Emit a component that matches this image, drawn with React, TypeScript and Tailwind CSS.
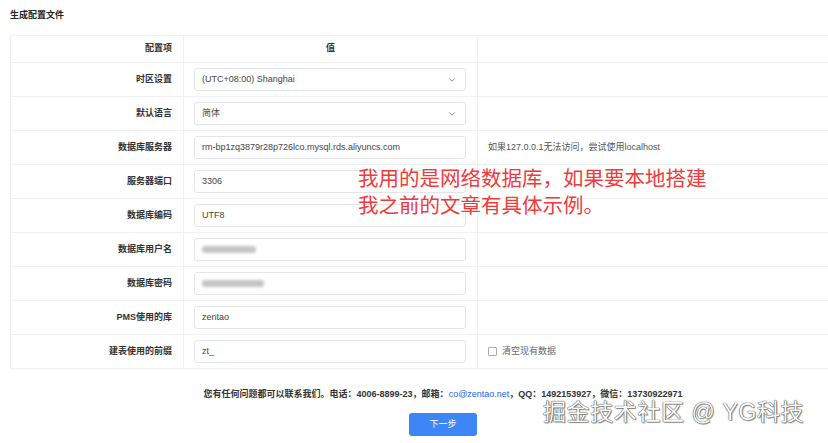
import { ChevronDown } from "lucide-react"

const font = { fontFamily: '"Liberation Sans", "Noto Sans CJK SC", sans-serif' }

type Row = {
  label: string
  kind: "select" | "input" | "blur"
  value?: string
  blurW?: number
  note?: string
  check?: string
}

const rows: Row[] = [
  { label: "时区设置", kind: "select", value: "(UTC+08:00) Shanghai" },
  { label: "默认语言", kind: "select", value: "简体" },
  {
    label: "数据库服务器",
    kind: "input",
    value: "rm-bp1zq3879r28p726lco.mysql.rds.aliyuncs.com",
    note: "如果127.0.0.1无法访问，尝试使用localhost",
  },
  { label: "服务器端口", kind: "input", value: "3306" },
  { label: "数据库编码", kind: "input", value: "UTF8" },
  { label: "数据库用户名", kind: "blur", blurW: 54 },
  { label: "数据库密码", kind: "blur", blurW: 62 },
  { label: "PMS使用的库", kind: "input", value: "zentao" },
  { label: "建表使用的前缀", kind: "input", value: "zt_", check: "清空现有数据" },
]

function Field({ row }: { row: Row }) {
  return (
    <div className="flex h-[23px] w-[272px] items-center rounded-[3px] border border-[#e3e5e8] bg-white pl-[7px] pr-[8px] text-[9px] text-[#444]">
      {row.kind === "blur" ? (
        <div className="h-[7px] rounded-[3px] bg-[#c4c4c4] blur-[1.5px]" style={{ width: row.blurW }} />
      ) : (
        <span className="flex-1 truncate">{row.value}</span>
      )}
      {row.kind === "select" && <ChevronDown className="ml-auto h-[10px] w-[10px] text-[#777]" strokeWidth={2} />}
    </div>
  )
}

export default function App() {
  return (
    <div className="relative h-[443px] w-[828px] overflow-hidden bg-white" style={font}>
      {/* page is wider than the crop, content centres at x=443 */}
      <div className="w-[886px] px-[10px] pt-[9px]">
        <p className="text-[9px] font-bold leading-[12px] text-[#222]">生成配置文件</p>

        {/* config table */}
        <div className="mt-[14px] border-t border-l border-[#f0f1f3]">
          <div className="grid h-[27px] grid-cols-[173px_294px_1fr] border-b border-[#f0f1f3] text-[9px] font-bold text-[#333]">
            <div className="flex items-center justify-end border-r border-[#f0f1f3] pr-[11px]">配置项</div>
            <div className="flex items-center justify-center border-r border-[#f0f1f3]">值</div>
            <div />
          </div>
          {rows.map((row) => (
            <div
              key={row.label}
              className="grid h-[34px] grid-cols-[173px_294px_1fr] border-b border-[#f0f1f3] text-[9px]"
            >
              <div className="flex items-center justify-end border-r border-[#f0f1f3] pr-[11px] font-bold text-[#333]">
                {row.label}
              </div>
              <div className="flex items-center border-r border-[#f0f1f3] pl-[10px]">
                <Field row={row} />
              </div>
              <div className="flex items-center pl-[10px] text-[#555]">
                {row.note}
                {row.check && (
                  <label className="flex items-center gap-[5px] text-[#666]">
                    <span className="h-[9px] w-[9px] rounded-[1px] border border-[#aaa] bg-white" />
                    {row.check}
                  </label>
                )}
              </div>
            </div>
          ))}
        </div>

        <p className="mt-[19px] text-center text-[9px] font-bold leading-[12px] text-[#333]">
          您有任何问题都可以联系我们。电话：4006-8899-23，邮箱：<span className="font-normal text-[#2563eb]">co@zentao.net</span>，QQ：1492153927，微信：13730922971
        </p>

        <div className="mt-[13px] flex justify-center">
          <button className="h-[23px] w-[68px] rounded-[3px] bg-[#3d86f5] text-[9px] text-white">下一步</button>
        </div>
      </div>

      {/* annotation */}
      <div className="absolute left-[358px] top-[165px] text-[20.5px] leading-[27px] text-[#ef3b3b]">
        <p>我用的是网络数据库，如果要本地搭建</p>
        <p>我之前的文章有具体示例。</p>
      </div>

      {/* watermark */}
      <div className="absolute left-[543px] top-[397px] text-[23px] leading-[30px] tracking-[0.6px] text-white [text-shadow:0_0_1px_#333,0_0_1px_#333,1px_1px_1px_#999]">
        掘金技术社区 @ YG科技
      </div>
    </div>
  )
}
